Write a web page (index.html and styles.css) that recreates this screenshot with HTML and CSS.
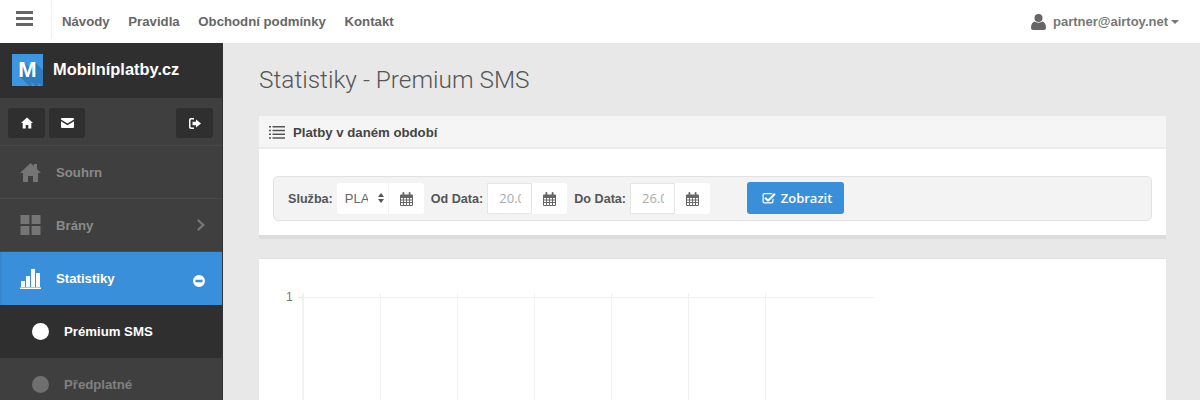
FILE: index.html
```html
<!DOCTYPE html>
<html lang="cs">
<head>
    <meta charset="UTF-8">
    <title>Statistiky - Premium SMS</title>
    <link rel="stylesheet" href="styles.css">
</head>
<body>
    <svg class="icon-defs" width="0" height="0">
        <symbol id="calendar" viewBox="0 0 13 14">
            <path d="M1 2.500h11a1 1 0 0 1 1 1V13a1 1 0 0 1-1 1H1a1 1 0 0 1-1-1V3.500a1 1 0 0 1 1-1zm0 3.500v1.600h2.100V6zm3 0v1.600h2.100V6zm3 0v1.600h2V6zm3 0v1.600h2V6zM1 8.500v1.600h2.100V8.500zm3 0v1.600h2.100V8.500zm3 0v1.600h2V8.500zm3 0v1.600h2V8.500zM1 11v2h2.100v-2zm3 0v2h2.100v-2zm3 0v2h2v-2zm3 0v2h2v-2z" fill-rule="evenodd"/>
            <rect x="2.500" y="0" width="1.800" height="4" rx=".8"/>
            <rect x="8.700" y="0" width="1.800" height="4" rx=".8"/>
        </symbol>
    </svg>

    <header class="topbar">
        <div class="burger">
            <svg width="17" height="15" viewBox="0 0 17 15"><path d="M0 0h17v3H0zM0 6h17v3H0zM0 12h17v3H0z"/></svg>
        </div>
        <nav class="topnav">
            <a href="#">Návody</a>
            <a href="#">Pravidla</a>
            <a href="#">Obchodní podmínky</a>
            <a href="#">Kontakt</a>
        </nav>
        <div class="user">
            <svg width="15" height="16" viewBox="0 0 15 16"><circle cx="7.500" cy="4" r="4"/><path d="M0 14c0-4 1.500-6 3.500-6.500C5 9 10 9 11.500 7.500 13.500 8 15 10 15 14c0 1.300-1 2-2 2H2c-1 0-2-.7-2-2z"/></svg>
            <span>partner@airtoy.net</span>
            <i class="caret"></i>
        </div>
    </header>

    <div class="layout">
        <aside class="sidebar">
            <div class="brand">
                <div class="logo">M</div>
                <span>Mobilníplatby.cz</span>
            </div>
            <div class="quick">
                <a class="quick-btn" href="#">
                    <svg width="12" height="12" viewBox="0 0 12 12"><path d="M6 .5 12 6h-1.700v5.500H7.300V8H4.700v3.500H1.700V6H0z"/></svg>
                </a>
                <a class="quick-btn wide" href="#">
                    <svg width="13" height="10" viewBox="0 0 13 10"><path d="M1 0h11a1 1 0 0 1 1 1v.6L6.500 5.600 0 1.600V1a1 1 0 0 1 1-1zM0 3.200l6.500 4 6.500-4V9a1 1 0 0 1-1 1H1a1 1 0 0 1-1-1z"/></svg>
                </a>
                <a class="quick-btn logout" href="#">
                    <svg width="12" height="11" viewBox="0 0 12 11"><path d="M2 0h3v1.500H2.500a1 1 0 0 0-1 1v6a1 1 0 0 0 1 1H5V11H2a2 2 0 0 1-2-2V2a2 2 0 0 1 2-2zM7 1.500l5 4-5 4V7.300H3.500V3.700H7z"/></svg>
                </a>
            </div>
            <ul class="menu">
                <li class="menu-item">
                    <svg class="menu-icon" width="21" height="20" viewBox="0 0 21 20"><path d="M10.500 1 14 4V2h3v5l4 4h-3v9h-5v-6H8v6H3v-9H0z"/></svg>
                    <span>Souhrn</span>
                </li>
                <li class="menu-item">
                    <svg class="menu-icon" width="21" height="20" viewBox="0 0 18 18"><path d="M0 0h8v8H0zM10 0h8v8h-8zM0 10h8v8H0zM10 10h8v8h-8z"/></svg>
                    <span>Brány</span>
                    <svg class="chevron" width="8" height="12" viewBox="0 0 8 12"><path d="M1.500 0 8 6l-6.500 6L0 10.300 4.500 6 0 1.700z"/></svg>
                </li>
                <li class="menu-item active">
                    <svg class="menu-icon" width="21" height="20" viewBox="0 0 21 20"><path d="M1 12h4v6H1zM6 7h4v11H6zM11 0h4v18h-4zM16 4h4v14h-4zM0 18.500h21V20H0z"/></svg>
                    <span>Statistiky</span>
                    <svg class="minus" width="12" height="12" viewBox="0 0 12 12"><path d="M6 0a6 6 0 1 1 0 12A6 6 0 0 1 6 0zM2.500 4.800v2.400h7V4.800z" fill-rule="evenodd"/></svg>
                </li>
                <li class="sub-item current"><i class="dot"></i><span>Prémium SMS</span></li>
                <li class="sub-item"><i class="dot"></i><span>Předplatné</span></li>
            </ul>
        </aside>

        <main class="content">
            <h1>Statistiky - Premium SMS</h1>

            <section class="panel">
                <div class="panel-head">
                    <svg width="16" height="13" viewBox="0 0 16 13"><path d="M0 0h2v1.500H0zM3.500 0H16v1.500H3.500zM0 3.700h2v1.500H0zM3.500 3.700H16v1.500H3.500zM0 7.500h2V9H0zM3.500 7.500H16V9H3.500zM0 11.300h2v1.500H0zM3.500 11.300H16v1.500H3.500z"/></svg>
                    <span>Platby v daném období</span>
                </div>
                <div class="panel-body">
                    <form class="filter">
                        <label>Služba:</label>
                        <div class="field">
                            <div class="select"><span>PLA</span><i class="updown"></i></div>
                            <div class="addon"><svg width="13" height="14"><use href="#calendar"/></svg></div>
                        </div>
                        <label>Od Data:</label>
                        <div class="field">
                            <div class="date"><span>20.0</span></div>
                            <div class="addon"><svg width="13" height="14"><use href="#calendar"/></svg></div>
                        </div>
                        <label>Do Data:</label>
                        <div class="field">
                            <div class="date"><span>26.0</span></div>
                            <div class="addon"><svg width="13" height="14"><use href="#calendar"/></svg></div>
                        </div>
                        <button class="show-btn" type="button">
                            <svg width="14" height="12" viewBox="0 0 14 12"><path d="M2.500 1h7a2 2 0 0 1 1 .3l-1 1H2.500a.8.8 0 0 0-.8.800v6.400c0 .4.400.8.800.8h7c.4 0 .8-.4.800-.8V7.500l1.200-1.200v3.200a2 2 0 0 1-2 2h-7a2 2 0 0 1-2-2V3a2 2 0 0 1 2-2z"/><path d="m3.800 5 2.200 2.200L12.200.9 13.700 2.400 6 10 2.300 6.500z"/></svg>
                            Zobrazit
                        </button>
                    </form>
                </div>
            </section>

            <section class="chart-card">
                <span class="tick-label">1</span>
                <svg class="chart" width="620" height="107" viewBox="0 0 620 107">
                    <path class="grid" d="M44 4.500h572M121.500 0v107M198.500 0v107M275.500 0v107M352.500 0v107M429.500 0v107M506.500 0v107"/>
                    <path class="axis" d="M44 0v107M39 4.500h5"/>
                </svg>
            </section>
        </main>
    </div>
</body>
</html>
```

FILE: styles.css
```css
* {
    box-sizing: border-box;
}
html, body {
    height: 400px;
    overflow: hidden;
}
body {
    margin: 0;
    font-family: "Liberation Sans", Arial, sans-serif;
    background: #e8e8e8;
    color: #555;
}
a {
    text-decoration: none;
    color: inherit;
}
.icon-defs {
    display: none;
}

.topbar {
    height: 43px;
    background: #fff;
    display: flex;
    align-items: center;
}
.burger {
    width: 52px;
    height: 39px;
    margin-top: -4px;
    padding: 11px 0 0 16px;
    border-right: 1px solid #eee;
    fill: #666;
}
.topnav {
    display: flex;
    gap: 18.7px;
    padding-left: 10px;
    font-size: 13.2px;
    font-weight: bold;
    color: #666;
}
.user {
    margin-left: auto;
    padding-right: 21px;
    display: flex;
    align-items: center;
    font-size: 13px;
    font-weight: bold;
    color: #777;
    fill: #666;
}
.user span {
    margin-left: 7px;
}
.caret {
    margin-left: 3px;
    border-top: 4px solid #777;
    border-left: 4px solid transparent;
    border-right: 4px solid transparent;
}

.layout {
    display: flex;
    height: 357px;
}
.sidebar {
    width: 223px;
    flex: none;
    overflow: hidden;
    background: #3f3f3f;
    border-right: 1px solid #333;
}
.brand {
    height: 55px;
    background: #2f2f2f;
    display: flex;
    align-items: center;
    padding: 0 0 2px 12px;
    color: #fff;
    font-size: 16.4px;
    font-weight: bold;
}
.brand span {
    margin-left: 10px;
}
.logo {
    width: 31px;
    height: 32px;
    overflow: hidden;
    background: #3f96e0;
    color: #fff;
    font-size: 22px;
    line-height: 32px;
    text-align: center;
    text-shadow: 1px 1px #2f7cc0, 2px 2px #2f7cc0, 3px 3px #2f7cc0, 4px 4px #2f7cc0, 5px 5px #2f7cc0, 6px 6px #2f7cc0, 7px 7px #2f7cc0, 8px 8px #2f7cc0, 9px 9px #2f7cc0;
}
.quick {
    height: 48px;
    display: flex;
    gap: 4px;
    padding: 10px 9px 0 8px;
    border-bottom: 1px solid #484848;
}
.quick-btn {
    width: 37px;
    height: 30px;
    background: #2f2f2f;
    border-radius: 3px;
    display: flex;
    align-items: center;
    justify-content: center;
    fill: #fff;
}
.quick-btn.wide {
    width: 36px;
}
.quick-btn.logout {
    margin-left: auto;
}
.menu {
    list-style: none;
    margin: 0;
    padding: 0;
}
.menu-item {
    height: 53px;
    display: flex;
    align-items: center;
    padding: 0 16px 0 20px;
    border-bottom: 1px solid #4a4a4a;
    font-size: 13.2px;
    font-weight: bold;
    color: #8a8a8a;
    fill: #757575;
}
.menu-item span {
    margin-left: 15px;
}
.chevron {
    margin-left: auto;
    margin-right: 1px;
}
.menu-item.active {
    background: #3a8fdb;
    border-bottom: 0;
    border-left: 2px solid #3a86cc;
    padding-left: 18px;
    color: #fff;
    fill: #fff;
}
.minus {
    margin-left: auto;
    margin-top: 4px;
    margin-right: 1px;
}
.sub-item {
    height: 53px;
    display: flex;
    align-items: center;
    padding-left: 32px;
    font-size: 13.2px;
    font-weight: bold;
    color: #808080;
}
.sub-item span {
    margin-left: 15px;
}
.dot {
    width: 17px;
    height: 17px;
    border-radius: 50%;
    background: #6f6f6f;
}
.sub-item.current {
    background: #2f2f2f;
    color: #fff;
}
.sub-item.current .dot {
    background: #fff;
}

.content {
    flex: 1;
    padding: 0 34px 0 36px;
}
h1 {
    margin: 22px 0 22px;
    font-family: Roboto, "Liberation Sans", sans-serif;
    font-size: 24.4px;
    line-height: 29px;
    font-weight: 300;
    color: #555;
}
.panel {
    background: #fff;
    border-bottom: 4px solid #dcdcdc;
    height: 123px;
}
.panel-head {
    height: 33px;
    background: #f5f5f5;
    border-bottom: 2px solid #ececec;
    display: flex;
    align-items: center;
    padding: 1px 0 0 10px;
    font-size: 13.2px;
    font-weight: bold;
    color: #444;
    fill: #555;
}
.panel-head span {
    margin-left: 8px;
}
.panel-body {
    padding: 27px 14px 0;
}
.filter {
    height: 45px;
    background: #f3f3f3;
    border: 1px solid #e2e2e2;
    border-radius: 5px;
    display: flex;
    align-items: center;
    padding-left: 14px;
}
.filter label {
    font-size: 12.6px;
    font-weight: bold;
    color: #555;
    margin-right: 4px;
}
.field {
    display: flex;
    height: 31px;
    margin-right: 7px;
    background: #fff;
    border-radius: 3px;
}
.select {
    width: 52px;
    padding-left: 8px;
    border-right: 1px solid #f3f3f3;
    font-size: 13px;
    line-height: 31px;
    color: #666;
    position: relative;
}
.select span {
    display: block;
    width: 23px;
    overflow: hidden;
}
.updown {
    position: absolute;
    right: 4px;
    top: 10px;
    width: 0;
    border-left: 3px solid transparent;
    border-right: 3px solid transparent;
    border-bottom: 4px solid #555;
}
.updown::after {
    content: "";
    position: absolute;
    left: -3px;
    top: 6px;
    border-left: 3px solid transparent;
    border-right: 3px solid transparent;
    border-top: 4px solid #555;
}
.date {
    width: 45px;
    padding-left: 11px;
    border: 1px solid #e6e6e6;
    font-family: "Open Sans", sans-serif;
    font-size: 13px;
    line-height: 29px;
    color: #aaa;
}
.date span {
    display: block;
    width: 22px;
    overflow: hidden;
    white-space: nowrap;
}
.addon {
    width: 35px;
    display: flex;
    align-items: center;
    justify-content: center;
    fill: #666;
}
.show-btn {
    height: 32px;
    width: 97px;
    margin: 0 0 2px 30px;
    padding: 0 0 0 3px;
    border: 0;
    border-radius: 3px;
    background: #3a8fdb;
    color: #fff;
    fill: #fff;
    font-family: "Open Sans", sans-serif;
    font-size: 13px;
    font-weight: 600;
    display: flex;
    align-items: center;
    justify-content: center;
    gap: 5px;
}

.chart-card {
    position: relative;
    height: 142px;
    margin-top: 19px;
    background: #fff;
    border-top: 1px solid #e2e2e2;
    padding-top: 34px;
}
.chart {
    display: block;
    fill: none;
}
.axis {
    stroke: #e4e4e4;
    stroke-width: 1;
}
.grid {
    stroke: #f1f1f1;
    stroke-width: 1;
}
.tick-label {
    position: absolute;
    left: 27px;
    top: 31px;
    font-size: 12px;
    color: #777;
}
```
